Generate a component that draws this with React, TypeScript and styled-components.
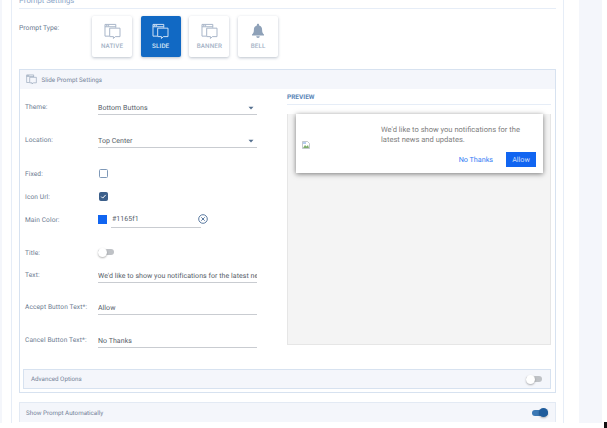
import React from "react";
import styled, { createGlobalStyle } from "styled-components";

const Global = createGlobalStyle`
  html, body { margin: 0; padding: 0; background: #fff; }
  body { font-family: Roboto, "Liberation Sans", sans-serif; text-rendering: geometricPrecision; }
`;

const Page = styled.div`
  position: relative;
  width: 607px;
  height: 428px;
  overflow: hidden;
  display: flex;
  background: #fff;
`;
const LeftStrip = styled.div`
  width: 2px;
  height: 423px;
  background: #f4f6fb;
  margin-right: 9px;
  flex: none;
`;
const Main = styled.main`
  width: 553px;
  height: 423px;
  flex: none;
  box-sizing: border-box;
  border-left: 1px solid #e6edf7;
  border-right: 1px solid #e6edf7;
  padding: 0 7px 0 7px;
  overflow: hidden;
`;
const RightPanel = styled.aside`
  width: 23px;
  height: 423px;
  background: #f4f6fb;
  margin-left: 15px;
  flex: none;
`;
const CornerMark = styled.div`
  position: absolute;
  left: 604px;
  top: 422px;
  width: 3px;
  height: 6px;
  background: #111;
`;
const TopTitle = styled.div`
  height: 9px;
  box-sizing: border-box;
  border-bottom: 1px solid #e6edf7;
  font-size: 7.7px;
  line-height: 8px;
  color: #8ba6c8;
  overflow: hidden;
  & > span { display: block; margin-top: -3px; }
`;
const TypeRow = styled.div`
  display: flex;
  margin-top: 7px;
  height: 41px;
`;
const TypeLabel = styled.div`
  width: 73px;
  font-size: 6.8px;
  line-height: 10px;
  padding-top: 7px;
  color: #6b7a90;
  flex: none;
`;
const Tiles = styled.div`
  display: flex;
  gap: 8.7px;
`;
const Tile = styled.div<{ $active?: boolean }>`
  width: 40px;
  height: 41px;
  box-sizing: border-box;
  border-radius: 2px;
  background: ${(p) => (p.$active ? "#1169c4" : "#fff")};
  color: ${(p) => (p.$active ? "#dce9f7" : "#a3b1c5")};
  box-shadow: 0 1px 3px rgba(60, 80, 110, 0.35);
  display: flex;
  flex-direction: column;
  align-items: center;
  padding-top: 7px;
  font-size: 6.3px;
  font-weight: 500;
  letter-spacing: 0.1px;
  & > svg { flex: none; }
  & > span { margin-top: 3px; line-height: 8px; }
`;
const Card = styled.section`
  margin-top: 12px;
  height: 324px;
  box-sizing: border-box;
  border: 1px solid #d7e2f0;
`;
const CardHeader = styled.header`
  height: 19px;
  background: #f4f6fb;
  display: flex;
  align-items: center;
  padding-left: 6px;
  gap: 4.5px;
  font-size: 6.3px;
  color: #76849a;
  & > svg { color: #8f9fb5; }
`;
const Columns = styled.div`
  display: flex;
  height: 262px;
`;
const FormCol = styled.div`
  width: 267px;
  flex: none;
  padding-left: 5px;
  padding-top: 8px;
  box-sizing: border-box;
`;
const Row = styled.div<{ $mt?: number }>`
  display: flex;
  align-items: center;
  height: 18px;
  margin-top: ${(p) => p.$mt ?? 0}px;
`;
const Label = styled.label`
  width: 73px;
  flex: none;
  font-size: 6.6px;
  color: #6b7a90;
  letter-spacing: 0.1px;
  padding-top: 2px;
`;
const Field = styled.div`
  width: 159px;
  height: 18px;
  box-sizing: border-box;
  border-bottom: 1px solid #c9ccd1;
  display: flex;
  align-items: center;
  justify-content: space-between;
  font-size: 7px;
  color: #555d68;
  white-space: nowrap;
  overflow: hidden;
  padding-top: 4px;
  padding-right: 1px;
  letter-spacing: 0.05px;
  & > svg { margin-right: 2px; fill: #55708f; flex: none; }
`;
const CheckBox = styled.span<{ $on?: boolean }>`
  width: 9px;
  height: 9px;
  margin-left: 1px;
  box-sizing: border-box;
  border-radius: 1.5px;
  border: 1px solid ${(p) => (p.$on ? "#3c5f8a" : "#7f99b8")};
  background: ${(p) => (p.$on ? "#3c5f8a" : "#fff")};
  display: flex;
  align-items: center;
  justify-content: center;
`;
const Swatch = styled.span`
  width: 9px;
  height: 9px;
  background: #1165f1;
  margin-right: 4px;
  flex: none;
`;
const ColorField = styled(Field)`
  width: 90px;
  height: 16px;
  margin-top: 1px;
  padding-top: 0;
  padding-left: 1px;
`;
const ClearButton = styled.span`
  margin-left: -3px;
  display: flex;
`;
const SwitchTrack = styled.span<{ $on?: boolean }>`
  position: relative;
  display: inline-block;
  width: 16px;
  height: 6px;
  border-radius: 3px;
  background: ${(p) => (p.$on ? "#3b78b5" : "#bfc2c6")};
`;
const SwitchKnob = styled.span<{ $on?: boolean }>`
  position: absolute;
  top: -1.5px;
  ${(p) => (p.$on ? "right: 0;" : "left: 0;")}
  width: 9px;
  height: 9px;
  border-radius: 50%;
  background: ${(p) => (p.$on ? "#1f5c9c" : "#fff")};
  box-shadow: 0 1px 2px rgba(0, 0, 0, 0.3);
`;
const PreviewCol = styled.div`
  width: 264px;
  flex: none;
  padding-top: 4px;
`;
const PreviewTitle = styled.div`
  height: 11px;
  border-bottom: 1px solid #e6edf7;
  font-size: 6.5px;
  line-height: 8px;
  font-weight: 700;
  color: #5b86b8;
`;
const PreviewStage = styled.div`
  margin-top: 9px;
  height: 231px;
  box-sizing: border-box;
  background: #f4f4f4;
  border: 1px solid #e6e6e6;
  border-top: 0;
  padding: 0 8px;
`;
const Popup = styled.div`
  width: 247px;
  height: 59px;
  box-sizing: border-box;
  background: #fff;
  box-shadow: 0 1px 5px rgba(0, 0, 0, 0.5);
  display: flex;
`;
const BrokenImage = styled.div`
  width: 85px;
  flex: none;
  box-sizing: border-box;
  padding: 27px 0 0 6px;
  & > svg { display: block; }
`;
const PopupBody = styled.div`
  flex: 1;
  padding: 11px 7px 0 0;
`;
const PopupText = styled.p`
  margin: 0;
  max-width: 145px;
  font-size: 7.55px;
  line-height: 9.5px;
  color: #808080;
`;
const PopupActions = styled.div`
  display: flex;
  justify-content: flex-end;
  align-items: center;
  margin-top: 8px;
  gap: 13px;
`;
const TextBtn = styled.span`
  font-size: 7.2px;
  color: #2f7af5;
`;
const PrimaryBtn = styled.span`
  width: 30px;
  height: 15px;
  background: #1165f1;
  color: #cfdffa;
  font-size: 7.2px;
  display: flex;
  align-items: center;
  justify-content: center;
`;
const BarBase = styled.div`
  height: 20px;
  box-sizing: border-box;
  background: #f4f6fb;
  display: flex;
  align-items: center;
  justify-content: space-between;
  font-size: 6.25px;
  color: #76849a;
`;
const AdvancedBar = styled(BarBase)`
  margin: 18px 4px 0 3px;
  border: 1px solid #d7e2f0;
  padding: 0 8px 0 7px;
`;
const ShowBar = styled(BarBase)`
  margin-top: 9px;
  border: 1px solid #e3eaf4;
  border-bottom: 0;
  padding: 0 7px 0 6px;
`;

const WindowIcon = ({ size = 17 }: { size?: number }) => (
  <svg width={size} height={size * 0.94} viewBox="0 0 18 17" fill="none" stroke="currentColor" strokeWidth="1">
    <path d="M1 14V1.5h11.5V5" />
    <path d="M1 4h11.5" />
    <path d="M1 14h4.5" />
    <path d="M6 5.5h11v9h-5l-2 2v-2H6z" />
    <circle cx="2.8" cy="2.8" r=".4" />
    <circle cx="4.6" cy="2.8" r=".4" />
  </svg>
);

const BellIcon = () => (
  <svg width="14" height="16" viewBox="0 0 14 16" fill="#8ea1b8">
    <path d="M7 0.8c.7 0 1.1.5 1.1 1.1v.5c2 .5 3 2.2 3 4.3 0 2.6.7 3.7 1.9 4.8v1H1v-1c1.2-1.1 1.9-2.2 1.9-4.8 0-2.1 1-3.8 3-4.3v-.5C5.9 1.3 6.3.8 7 .8z" />
    <path d="M5.2 13.3h3.6A1.8 1.8 0 0 1 7 15a1.8 1.8 0 0 1-1.8-1.7z" />
  </svg>
);

const Check = () => (
  <svg width="7" height="7" viewBox="0 0 7 7" fill="none" stroke="#fff" strokeWidth="1">
    <path d="M1.2 3.6l1.5 1.5 3-3.2" />
  </svg>
);

const ClearIcon = () => (
  <svg width="10" height="10" viewBox="0 0 10 10" fill="none" stroke="#4a6c96" strokeWidth=".9">
    <circle cx="5" cy="5" r="4.3" />
    <path d="M3.3 3.3l3.4 3.4M6.7 3.3L3.3 6.7" />
  </svg>
);

const BrokenImg = () => (
  <svg width="8" height="8" viewBox="0 0 8 8">
    <path d="M0.5 0.5h5l2 2v5h-7z" fill="#fff" stroke="#aab1b8" strokeWidth=".7" />
    <path d="M1 7l2-3 1.5 1.5L6 4l1 3z" fill="#7fae6d" />
    <path d="M1 1h3v2H1z" fill="#b7cdf0" />
  </svg>
);

const DropCaret = () => (
  <svg width="6" height="4" viewBox="0 0 6 4">
    <path d="M0.5 0.8h5L3 3.5z" />
  </svg>
);

export default function App() {
  return (
    <Page>
      <Global />
      <LeftStrip />
      <Main>
        <TopTitle>
          <span>Prompt Settings</span>
        </TopTitle>
        <TypeRow>
          <TypeLabel>Prompt Type:</TypeLabel>
          <Tiles>
            <Tile>
              <WindowIcon />
              <span>NATIVE</span>
            </Tile>
            <Tile $active>
              <WindowIcon />
              <span>SLIDE</span>
            </Tile>
            <Tile>
              <WindowIcon />
              <span>BANNER</span>
            </Tile>
            <Tile>
              <BellIcon />
              <span>BELL</span>
            </Tile>
          </Tiles>
        </TypeRow>
        <Card>
          <CardHeader>
            <WindowIcon size={11} />
            Slide Prompt Settings
          </CardHeader>
          <Columns>
            <FormCol>
              <Row>
                <Label>Theme:</Label>
                <Field>
                  Bottom Buttons
                  <DropCaret />
                </Field>
              </Row>
              <Row $mt={15}>
                <Label>Location:</Label>
                <Field>
                  Top Center
                  <DropCaret />
                </Field>
              </Row>
              <Row $mt={16}>
                <Label>Fixed:</Label>
                <CheckBox />
              </Row>
              <Row $mt={5}>
                <Label>Icon Url:</Label>
                <CheckBox $on>
                  <Check />
                </CheckBox>
              </Row>
              <Row $mt={5}>
                <Label>Main Color:</Label>
                <Swatch />
                <ColorField>#1165f1</ColorField>
                <ClearButton>
                  <ClearIcon />
                </ClearButton>
              </Row>
              <Row $mt={15}>
                <Label>Title:</Label>
                <SwitchTrack>
                  <SwitchKnob />
                </SwitchTrack>
              </Row>
              <Row $mt={4}>
                <Label>Text:</Label>
                <Field>We'd like to show you notifications for the latest news and updates.</Field>
              </Row>
              <Row $mt={14}>
                <Label>Accept Button Text*:</Label>
                <Field>Allow</Field>
              </Row>
              <Row $mt={15}>
                <Label>Cancel Button Text*:</Label>
                <Field>No Thanks</Field>
              </Row>
            </FormCol>
            <PreviewCol>
              <PreviewTitle>PREVIEW</PreviewTitle>
              <PreviewStage>
                <Popup>
                  <BrokenImage>
                    <BrokenImg />
                  </BrokenImage>
                  <PopupBody>
                    <PopupText>We'd like to show you notifications for the latest news and updates.</PopupText>
                    <PopupActions>
                      <TextBtn>No Thanks</TextBtn>
                      <PrimaryBtn>Allow</PrimaryBtn>
                    </PopupActions>
                  </PopupBody>
                </Popup>
              </PreviewStage>
            </PreviewCol>
          </Columns>
          <AdvancedBar>
            Advanced Options
            <SwitchTrack>
              <SwitchKnob />
            </SwitchTrack>
          </AdvancedBar>
        </Card>
        <ShowBar>
          Show Prompt Automatically
          <SwitchTrack $on>
            <SwitchKnob $on />
          </SwitchTrack>
        </ShowBar>
      </Main>
      <RightPanel />
      <CornerMark />
    </Page>
  );
}
